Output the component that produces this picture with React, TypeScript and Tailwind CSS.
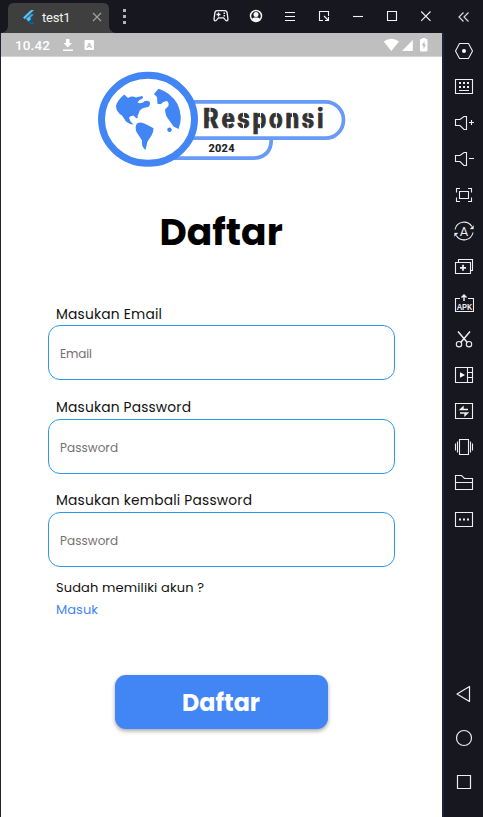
import type { ReactNode } from "react";

const POPPINS = "font-[Poppins,Inter,sans-serif]";

function TopIcon({ children }: { children: ReactNode }) {
  return (
    <svg width="34" height="33" viewBox="0 0 34 33" fill="none" stroke="#f4f4f6" strokeWidth="1.1" className="shrink-0">
      {children}
    </svg>
  );
}

function SideIcon({ children }: { children: ReactNode }) {
  return (
    <svg width="21" height="36" viewBox="0 0 21 36" fill="none" stroke="#eeeef0" strokeWidth="1.1" className="shrink-0">
      {children}
    </svg>
  );
}

function NavIcon({ children }: { children: ReactNode }) {
  return (
    <svg width="21" height="44" viewBox="0 0 21 44" fill="none" stroke="#eeeef0" strokeWidth="1.2" className="shrink-0">
      {children}
    </svg>
  );
}

function TitleBar() {
  return (
    <header className="flex h-[33px] shrink-0 bg-[#16171f]">
      <div className="flex w-[205px] shrink-0">
        <svg width="134" height="33" viewBox="0 0 134 33">
          <path d="M2 33Q8 31 8 26V9Q8 3 14 3H103Q109 3 109 9V26Q109 31 115 33Z" fill="#3f3f3f" />
          <path d="M23 17.5 31 10H34L24.7 19.2Z" fill="#54c5f8" />
          <path d="M26.2 19 31 14.3H34L29.2 19 34 23.7H31Z" fill="#39a9e8" />
          <path d="M26.2 19 28.7 16.7 31.3 19 28.7 21.4Z" fill="#54c5f8" />
          <path d="M28.7 21.4 31.2 19 34 23.7H31Z" fill="#01579b" />
          <text x="42" y="22" fontFamily="Roboto, sans-serif" fontSize="13" fill="#f3f3f3" textLength="28.500">test1</text>
          <path d="M93 13l8 8M101 13l-8 8" stroke="#a5a5a5" strokeWidth="1.1" />
          <path d="M123 9h3v3h-3zM123 15h3v3h-3zM123 21h3v3h-3z" fill="#b4b4b8" />
        </svg>
      </div>
      <TopIcon>
        <path d="M12.2 10.6h7.600q2 0 2.300 2.100l.8 6q.1 2.300-1.300 2.200-1 0-2.200-2.100l-.8-.9h-5.200l-.8.9q-1.200 2.100-2.200 2.100-1.400.1-1.300-2.200l.8-6q.3-2.100 2.300-2.100z" strokeWidth="1.300" />
        <path d="M11.500 14.500h4M13.500 12.500v4" strokeWidth="1.300" />
        <path d="M18.500 12.500h1.500v1.500h-1.500zM18.500 15h1.500v1.500h-1.500z" fill="#f4f4f6" stroke="none" />
      </TopIcon>
      <TopIcon>
        <circle cx="17" cy="16" r="5.500" strokeWidth="1.500" />
        <circle cx="17" cy="14.500" r="2.500" fill="#f4f4f6" stroke="none" />
        <path d="M13 19.800q0-2.300 2.500-2.300h3q2.500 0 2.500 2.300-1.700 1.700-4 1.700t-4-1.700z" fill="#f4f4f6" stroke="none" />
      </TopIcon>
      <TopIcon><path d="M12 12.500h10M12 16.500h10M12 20.500h10" /></TopIcon>
      <TopIcon>
        <path d="M16 20.500h-3.500v-9h9V16M17 16l4 4M21.500 17v3.500H18" />
      </TopIcon>
      <TopIcon><path d="M12 16.500h10" /></TopIcon>
      <TopIcon><path d="M12.500 11.500h9v9h-9z" /></TopIcon>
      <TopIcon><path d="M12.200 11.500l9.300 9.300M21.500 11.500l-9.300 9.300" /></TopIcon>
      <svg width="40" height="33" viewBox="0 0 40 33" fill="none" stroke="#d8d8dc" strokeWidth="1.200">
        <path d="M20.500 12.500l-4.500 4.500 4.500 4.500M25.500 12.500l-4.500 4.500 4.500 4.500" />
      </svg>
    </header>
  );
}

function StatusBar() {
  return (
    <div className="flex h-[24px] shrink-0 border-b border-[#d4d4d4] bg-[#bfbfbf]">
      <svg width="441" height="23" viewBox="1 33 441 23" fill="#fff">
        <text x="15" y="50" fontFamily="Roboto, sans-serif" fontSize="13.500" fontWeight="500" textLength="35">10.42</text>
        <path d="M66 39h3.500v4H72l-4.200 4.500L63.500 43H66zM63 49.500h10V51H63z" />
        <rect x="84.500" y="40" width="9.500" height="10" rx="1" />
        <text x="86.500" y="48" fontFamily="Roboto, sans-serif" fontSize="8" fontWeight="700" fill="#bfbfbf">A</text>
        <path d="M383.700 41.500q7.800-5.300 15.300 0L391.300 51z" />
        <path d="M402 51h10.800V40z" />
        <path d="M422 39v-1h3.500v1h1q1 0 1 1v10.500q0 1-1 1H421q-1 0-1-1V40q0-1 1-1z" />
        <path d="M424.500 41l-2.800 4.500h1.700V49l2.700-4.500h-1.600z" fill="#bfbfbf" />
      </svg>
    </div>
  );
}

function Logo() {
  return (
    <svg width="270" height="115" viewBox="90 60 270 115" className="ml-[89px] mt-[3px] block shrink-0">
      <g fill="none" stroke="#679bf6" strokeWidth="3.700">
        <path d="M170 158.200H254Q271.300 157 271.300 139" />
        <path d="M180 101.800H325.500a18 18.200 0 0 1 0 36.400H180" fill="#fff" />
      </g>
      <ellipse cx="148" cy="119.300" rx="46.500" ry="44" fill="#fff" stroke="#4285f4" strokeWidth="6.900" />
      <g fill="#4285f4">
        <path d="M116 105.500Q118 99.500 124.300 94.500L128 98Q132 95.500 136 97.500L142 96Q145 98 139.500 100L137.500 102.500Q140 104 143 102.500 145.500 99.500 149.500 101.500 151 105 148 107L143.500 108Q139.500 109.500 139 112.500L137.500 116Q138.500 119 136 118L133.500 115.500Q130 116 129 117.500L130.500 121.500 133.700 124.500Q129.500 124.500 126 121.500L122 115.500Q116 112 116 105.500Z" />
        <path d="M137 123.500Q140 122 143 123L147.500 125 153.500 128.200Q153.500 132.500 151.500 135.500L147.500 141.500 145.500 150Q141 146.500 142 140.500L136.500 132Q134.500 127 137 123.500Z" />
        <path d="M154 94 158.500 88.700Q171 92.500 177.500 104 183.500 117 178.500 129L173.500 126.500 166.500 116.500Q165 112 165 109.500L168.500 106Q169 101.500 166.500 101 163 101.500 161 104H157.500L157 97Z" />
        <path d="M167.500 128.500q2.500-2.300 4.500 1-1 3.500-3.500 2.300-2-1-1-3.300z" />
      </g>
      <text transform="translate(203 128) scale(.88 1)" fontFamily="Roboto, sans-serif" fontSize="27.500" fontWeight="800" fill="#333" stroke="#333" strokeWidth=".7" textLength="137">Responsi</text>
      <path d="M210 107v22M228 112v4.500M228 123v6M243.500 112v4.500M243.500 124v5M260.500 112v4.500M260.500 124v5M276.300 112v5M276.300 123v6M292.500 112v5M308 112v4.500M308 124v5" stroke="#fff" strokeWidth="1" />
      <text x="208.500" y="151.500" fontFamily="Roboto, sans-serif" fontSize="11" fontWeight="800" fill="#222" textLength="26">2024</text>
    </svg>
  );
}

interface FieldProps {
  label: string;
  hint: string;
  width: number;
  hintWidth: number;
  labelY: number;
  hintY: number;
}

function Field({ label, hint, width, hintWidth, labelY, hintY }: FieldProps) {
  return (
    <div className="flex flex-col">
      <div className="flex h-[20px] items-center pl-[8px]">
        <svg width={width + 4} height="20" className="overflow-visible">
          <text x="0" y={labelY} className={POPPINS} fontSize="13.800" fill="#111" textLength={width}>{label}</text>
        </svg>
      </div>
      <div className="flex h-[55px] w-[347px] items-center rounded-[12px] border border-[#2c99ee] pl-[11px]">
        <svg width={hintWidth + 4} height="20" className="overflow-visible">
          <text x="0" y={hintY} className={POPPINS} fontSize="12" fill="#757070" textLength={hintWidth}>{hint}</text>
        </svg>
      </div>
    </div>
  );
}

function SideBar() {
  return (
    <aside className="flex w-[41px] shrink-0 flex-col items-start border-l-2 border-[#211f3e] bg-[#16171f] pl-[9px]">
      <SideIcon>
        <path d="M6.500 10.500h9l4 7.500-4 7.500h-9l-4-7.500z" />
        <circle cx="11" cy="18" r="2" fill="#fff" stroke="none" />
      </SideIcon>
      <SideIcon>
        <path d="M2.500 10.500h17v14h-17zM6 21.500h10" />
        <path d="M6 14h10M6 18h10" strokeWidth="2" strokeDasharray="2 2" />
      </SideIcon>
      <SideIcon>
        <path d="M2.500 14.500h4.500l4-3h2.500v13H11l-4-4H2.500zM16 17.500h5M18.500 15v5" />
      </SideIcon>
      <SideIcon>
        <path d="M2.500 14.500h4.500l4-3h2.500v13H11l-4-4H2.500zM16 17.500h5" />
      </SideIcon>
      <SideIcon>
        <path d="M3.500 15.500v-4H7M15 11.500h3.500v4M18.500 20.500v4H15M7 24.500H3.500v-4M6.500 14.500h9v7h-9z" />
      </SideIcon>
      <SideIcon>
        <path d="M2 16.500A9.200 9.200 0 0 1 18.800 13.500M20 19.500A9.200 9.200 0 0 1 3.200 22.500" />
        <path d="M20.500 12.500v3.500h-3.500zM1.500 23.500V20H5z" fill="#eee" strokeWidth=".3" />
        <text x="11" y="22.500" textAnchor="middle" fontFamily="Roboto, sans-serif" fontSize="13" fill="#eee" stroke="none">A</text>
      </SideIcon>
      <SideIcon>
        <path d="M5.500 13.500v-3h14v11h-2M2.500 13.500h15v11h-15z" />
        <path d="M7 18.800h6M10 15.800v6" strokeWidth="1.800" />
      </SideIcon>
      <SideIcon>
        <path d="M7 13.500H2.500v13h18v-13H15" />
        <path d="M11 16v-5M8.500 12.500 11 10l2.500 2.500" strokeWidth="1.500" />
        <text x="4" y="24.500" fontFamily="Liberation Mono, monospace" fontSize="9.500" fill="#fff" stroke="#fff" strokeWidth=".2" textLength="15" lengthAdjust="spacingAndGlyphs">APK</text>
      </SideIcon>
      <SideIcon>
        <path d="M5 10.500l9.300 11M17 10.500l-9.300 11" strokeWidth="1.500" />
        <circle cx="6" cy="23.200" r="2.700" />
        <circle cx="16" cy="23.200" r="2.700" />
      </SideIcon>
      <SideIcon>
        <path d="M2.500 10.500h17v15h-17zM14.500 10.500v15M14.500 15.500h5M14.500 20.500h5" />
        <path d="M7 15.200l5 2.800-5 2.800z" fill="#fff" stroke="none" />
      </SideIcon>
      <SideIcon>
        <path d="M2.500 10.500h17v15h-17z" />
        <path d="M15 16.500H7.500l2.500-2.300V16.500M7 20H14.500L12 22.300V20" strokeWidth="1.400" />
      </SideIcon>
      <SideIcon>
        <path d="M6.500 10.500h9v15h-9zM4.500 12.500v11M17.500 12.500v11M2.500 14.500v7M19.500 14.500v7" />
      </SideIcon>
      <SideIcon>
        <path d="M2.500 10.500h6l3 3h8v11h-17zM2.500 17.500h17" />
      </SideIcon>
      <SideIcon>
        <path d="M2.500 11.500h17v14h-17z" />
        <path d="M6 18.500h10" strokeWidth="2" strokeDasharray="2 2" />
      </SideIcon>
      <div className="mt-[135px] flex flex-col">
        <NavIcon><path d="M16.500 14.500v15L4 22z" strokeLinejoin="round" /></NavIcon>
        <NavIcon><circle cx="11" cy="22" r="7.500" /></NavIcon>
        <NavIcon><path d="M4.500 15.500h13v13h-13z" /></NavIcon>
      </div>
    </aside>
  );
}

export default function App() {
  return (
    <div className="flex h-[817px] w-[483px] flex-col overflow-hidden bg-[#16171f]">
      <TitleBar />
      <div className="flex min-h-0 flex-1">
        <main className="flex w-[442px] shrink-0 flex-col border-l border-[#211f3e] bg-white">
          <StatusBar />
          <Logo />
          <h1 className="mt-[31px] flex h-[50px] justify-center">
            <svg width="122" height="50" className="overflow-visible">
              <text x="-1.500" y="39" className={POPPINS} fontSize="37.600" fontWeight="700">Daftar</text>
            </svg>
          </h1>
          <div className="ml-[47px] mt-[49px] flex flex-col">
            <Field label="Masukan Email" hint="Email" width={106} hintWidth={32} labelY={13.5} hintY={14.5} />
            <div className="mt-[19px]">
              <Field label="Masukan Password" hint="Password" width={135} hintWidth={58} labelY={13} hintY={14.5} />
            </div>
            <div className="mt-[18px]">
              <Field label="Masukan kembali Password" hint="Password" width={196} hintWidth={58} labelY={13} hintY={14.5} />
            </div>
          </div>
          <svg width="160" height="56" viewBox="0 0 160 56" className="ml-[55px] shrink-0">
            <text x="0" y="25" className={POPPINS} fontSize="13" fill="#111" textLength="148">Sudah memiliki akun ?</text>
            <text x="0" y="46.800" className={POPPINS} fontSize="13" fill="#4285f4" textLength="42">Masuk</text>
          </svg>
          <button className="ml-[114px] mt-[52px] flex h-[54px] w-[213px] shrink-0 items-center justify-center rounded-[11px] bg-[#4285f4] shadow-[0_2px_4px_rgba(0,0,0,0.35)]">
            <svg width="78" height="34" className="overflow-visible">
              <text x="-1" y="26" className={POPPINS} fontSize="23.800" fontWeight="700" fill="#fff">Daftar</text>
            </svg>
          </button>
        </main>
        <SideBar />
      </div>
    </div>
  );
}
